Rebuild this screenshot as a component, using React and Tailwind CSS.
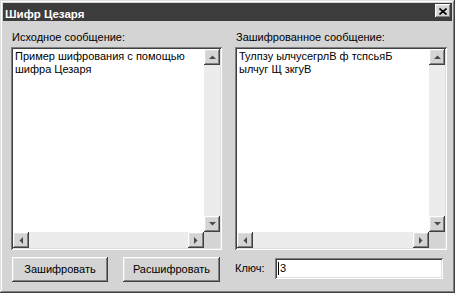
import React from "react";

const raised =
  "shadow-[inset_-1px_-1px_0_#404040,inset_1px_1px_0_#ffffff,inset_-2px_-2px_0_#808080,inset_2px_2px_0_#dfdfdf]";
const sunken =
  "shadow-[inset_1px_1px_0_#808080,inset_-1px_-1px_0_#ffffff,inset_2px_2px_0_#404040,inset_-2px_-2px_0_#dfdfdf]";

function Arrow({ dir }) {
  const pts = {
    up: "0,4 7,4 3.5,0.5",
    down: "0,0 7,0 3.5,3.5",
    left: "4,0 4,7 0.5,3.5",
    right: "0,0 0,7 3.5,3.5",
  }[dir];
  const vertical = dir === "up" || dir === "down";
  return (
    <svg width={vertical ? 7 : 4} height={vertical ? 4 : 7} viewBox={vertical ? "0 0 7 4" : "0 0 4 7"}>
      <polygon points={pts} fill="#4a4a4a" />
    </svg>
  );
}

function ScrollBtn({ dir }) {
  return (
    <div className={`w-[16px] h-[16px] bg-[#d4d4d4] flex items-center justify-center ${raised}`}>
      <Arrow dir={dir} />
    </div>
  );
}

function Memo({ lines }) {
  return (
    <div className={`h-[203px] p-[2px] bg-white ${sunken}`}>
      <div className="grid h-full grid-cols-[1fr_16px] grid-rows-[1fr_16px]">
        <div className="bg-white pl-[2px] pt-[1px] text-[11px] leading-[13px] text-black">
          {lines.map((l, i) => (
            <div key={i} className="whitespace-pre">{l}</div>
          ))}
        </div>
        <div className="flex flex-col bg-[#ececec]">
          <ScrollBtn dir="up" />
          <div className="flex-1" />
          <ScrollBtn dir="down" />
        </div>
        <div className="flex bg-[#ececec]">
          <ScrollBtn dir="left" />
          <div className="flex-1" />
          <ScrollBtn dir="right" />
        </div>
        <div className="bg-[#d4d4d4]" />
      </div>
    </div>
  );
}

function Button({ children, className = "" }) {
  return (
    <div
      className={`h-[25px] bg-[#d4d4d4] flex items-center justify-center text-[11px] text-black ${raised} ${className}`}
    >
      {children}
    </div>
  );
}

export default function App() {
  return (
    <div
      className="w-[455px] h-[293px] bg-[#d4d4d4] p-[3px] flex flex-col shadow-[inset_-1px_-1px_0_#404040,inset_1px_1px_0_#dfdfdf,inset_-2px_-2px_0_#808080,inset_2px_2px_0_#ffffff]"
      style={{ fontFamily: '"Liberation Sans", Arial, sans-serif' }}
    >
      <div className="h-[18px] bg-[#3c3c3c] flex justify-between">
        <div className="pl-[2px] pt-[4px] text-[11.5px] leading-[14px] font-bold text-white">Шифр Цезаря</div>
        <div className={`mt-[1px] mr-[1px] w-[16px] h-[14px] bg-[#d4d4d4] flex items-center justify-center ${raised}`}>
          <svg width="8" height="7" viewBox="0 0 8 7">
            <path d="M0.5 0.5 L7.5 6.5 M7.5 0.5 L0.5 6.5" stroke="#000" strokeWidth="1.6" />
          </svg>
        </div>
      </div>
      <div className="flex-1 pl-[8px] pt-[10px] flex gap-[13px]">
        <div className="w-[211px] flex flex-col">
          <div className="text-[11px] leading-[13px] text-black pl-[1px]">Исходное сообщение:</div>
          <div className="mt-[3px]">
            <Memo lines={["Пример шифрования с помощью", "шифра Цезаря"]} />
          </div>
          <div className="mt-[7px] flex gap-[15px] pl-[1px]">
            <Button className="w-[96px]">Зашифровать</Button>
            <Button className="w-[97px]">Расшифровать</Button>
          </div>
        </div>
        <div className="w-[212px] flex flex-col">
          <div className="text-[11px] leading-[13px] text-black pl-[1px]">Зашифрованное сообщение:</div>
          <div className="mt-[3px]">
            <Memo lines={["Тулпзу ылчусегрлВ ф тспсьяБ", "ылчуг Щ зкгуВ"]} />
          </div>
          <div className="mt-[8px] flex items-center">
            <div className="w-[40px] text-[11px] text-black">Ключ:</div>
            <div className={`w-[168px] h-[21px] bg-white p-[2px] flex items-center ${sunken}`}>
              <div className="pl-[1px] flex items-center text-[11px] leading-[13px] text-black">
                <span className="w-[1px] h-[13px] bg-black mr-[1px]" />
                3
              </div>
            </div>
          </div>
        </div>
      </div>
    </div>
  );
}
